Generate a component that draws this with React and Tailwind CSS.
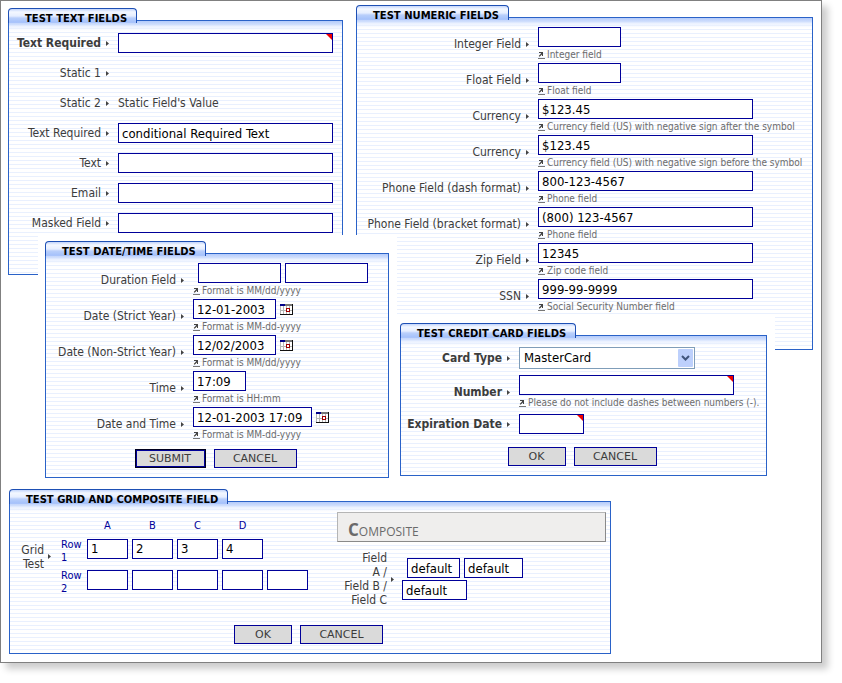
import React, { useId } from "react";

const stripes =
  "bg-[linear-gradient(to_bottom,#b4cbfa_0px,#d3e1fd_4px,#e9f0ff_5px,rgba(255,255,255,0)_10px),repeating-linear-gradient(to_bottom,#ffffff_0px,#ffffff_3px,#e9f0fe_3px,#e9f0fe_4px)]";
const inputBase =
  "block h-5 shrink-0 rounded-none border border-[#000099] bg-white px-[3px] text-[13px] leading-[18px] text-black outline-none";

function Panel({ title, children, className = "" }) {
  return (
    <section className={"flex flex-col " + className}>
      <h2 className="relative z-10 -mb-[3px] h-[15px] self-start rounded-t-[4px] border border-b-0 border-[#1d4fb4] bg-[linear-gradient(to_bottom,#c3d5fb_0px,#f3f7ff_3px,#e6eeff_7px,#b9cffb_9px,#a6c2fb_13px,#b4cbfa_15px)] pt-[3px] pr-[9px] pl-4 font-[Verdana,'DejaVu_Sans',sans-serif] text-[10px] leading-[13px] font-bold whitespace-nowrap text-black">
        {title}
      </h2>
      <div className={"grow border border-[#2a62c8] " + stripes}>{children}</div>
    </section>
  );
}

function Arrow() {
  return (
    <svg className="h-[5px] w-[3px] shrink-0" viewBox="0 0 3 5" aria-hidden="true">
      <path d="M0 0L3 2.5L0 5Z" fill="#444" />
    </svg>
  );
}

function Row({ label, id, labelWidth, className = "", bold, help, children }) {
  const Tag = id ? "label" : "span";
  return (
    <div className={"flex items-center gap-[9px] " + className}>
      <Tag
        htmlFor={id}
        className={
          "flex shrink-0 items-center justify-end gap-[5px] text-[12px] leading-[14px] whitespace-nowrap text-[#3c3c3c] " +
          labelWidth +
          (help ? " pb-[2px]" : "") +
          (bold ? " font-bold" : "")
        }
      >
        {label}
        <Arrow />
      </Tag>
      {help ? (
        <div>
          {children}
          <Help>{help}</Help>
        </div>
      ) : (
        children
      )}
    </div>
  );
}

function Box({ id, width, value, required, label }) {
  return (
    <span className="relative block w-fit shrink-0">
      <input
        id={id}
        aria-label={label}
        aria-required={required}
        defaultValue={value}
        className={inputBase + " " + width}
      />
      {required && (
        <svg className="absolute top-px right-px h-[6px] w-[6px]" viewBox="0 0 6 6" aria-hidden="true">
          <path d="M0 0H6V6Z" fill="#f00000" />
        </svg>
      )}
    </span>
  );
}

function Help({ children }) {
  return (
    <p className="flex h-4 items-center gap-[2px] font-[Verdana,'DejaVu_Sans_Condensed','DejaVu_Sans',sans-serif] text-[10px] leading-4 whitespace-nowrap text-[#6c6c6c]">
      <svg className="h-[7px] w-[7px] shrink-0" viewBox="0 0 7 7" aria-hidden="true">
        <path d="M1 0H5V4H4V2.4L1.600 4.800L0.700 4L3 1.500V1H1Z" fill="#444" />
        <path d="M0 6H7V7H0Z" fill="#777" />
      </svg>
      {children}
    </p>
  );
}

function CalendarButton() {
  return (
    <button type="button" aria-label="Choose date" className="h-[11px] w-[13px]">
      <svg className="block h-[11px] w-[13px]" viewBox="0 0 13 11" shapeRendering="crispEdges" aria-hidden="true">
        <rect width="13" height="11" fill="#111" />
        <rect x="0" y="2" width="12" height="8" fill="#fff" />
        <rect width="12" height="2" fill="#777" />
        <rect width="5" height="2" fill="#00008b" />
        <path d="M0 2H1V10H0ZM3 2H4V10H3ZM6 2H7V10H6ZM9 2H10V10H9ZM1 6H12V7H1Z" fill="#b5b5b5" />
        <rect x="6" y="4" width="4" height="4" fill="#a00000" />
        <rect x="7" y="5" width="2" height="2" fill="#fff" />
      </svg>
    </button>
  );
}

function Button({ children, width, primary }) {
  return (
    <button
      type="button"
      className={
        "h-[19px] border bg-[#dadada] font-[Verdana,'DejaVu_Sans',sans-serif] text-[11px] leading-[15px] text-[#3c3c3c] " +
        (primary ? "border-[#000020] shadow-[inset_0_0_0_1px_#000099] " : "border-[#000099] ") +
        width
      }
    >
      {children}
    </button>
  );
}

function TextPanel() {
  const id = useId();
  const rows = [
    { label: "Text Required", required: true },
    { label: "Static 1", text: "" },
    { label: "Static 2", text: "Static Field's Value" },
    { label: "Text Required", value: "conditional Required Text" },
    { label: "Text" },
    { label: "Email" },
    { label: "Masked Field" },
  ];
  return (
    <Panel title="TEST TEXT FIELDS">
      <div className="pt-[7px] pb-9">
        {rows.map((r, i) => (
          <Row
            key={i}
            label={r.label}
            bold={r.required}
            id={r.text === undefined ? id + i : undefined}
            labelWidth="w-[100px]"
            className="h-[30px]"
          >
            {r.text === undefined ? (
              <Box id={id + i} width="w-[215px]" value={r.value} required={r.required} />
            ) : (
              <span className="text-[12px] leading-[14px] text-[#3c3c3c]">{r.text}</span>
            )}
          </Row>
        ))}
      </div>
    </Panel>
  );
}

function NumericPanel() {
  const id = useId();
  const rows = [
    ["Integer Field", "", "Integer field", "w-[83px]"],
    ["Float Field", "", "Float field", "w-[83px]"],
    ["Currency", "$123.45", "Currency field (US) with negative sign after the symbol"],
    ["Currency", "$123.45", "Currency field (US) with negative sign before the symbol"],
    ["Phone Field (dash format)", "800-123-4567", "Phone field"],
    ["Phone Field (bracket format)", "(800) 123-4567", "Phone field"],
    ["Zip Field", "12345", "Zip code field"],
    ["SSN", "999-99-9999", "Social Security Number field"],
  ];
  return (
    <Panel title="TEST NUMERIC FIELDS">
      <div className="pt-[9px] pb-[34px]">
        {rows.map(([label, value, help, width = "w-[215px]"], i) => (
          <Row key={i} label={label} id={id + i} labelWidth="w-[172px]" help={help}>
            <Box id={id + i} width={width} value={value} />
          </Row>
        ))}
      </div>
    </Panel>
  );
}

function DatePanel() {
  const id = useId();
  const rows = [
    ["Date (Strict Year)", "12-01-2003", "Format is MM-dd-yyyy", "w-[83px]", true],
    ["Date (Non-Strict Year)", "12/02/2003", "Format is MM/dd/yyyy", "w-[83px]", true],
    ["Time", "17:09", "Format is HH:mm", "w-[53px]", false],
    ["Date and Time", "12-01-2003 17:09", "Format is MM-dd-yyyy", "w-[119px]", true],
  ];
  return (
    <Panel title="TEST DATE/TIME FIELDS">
      <div className="pt-[9px] pb-[9px]">
        <Row label="Duration Field" id={id + "d"} labelWidth="w-[138px]" help="Format is MM/dd/yyyy">
          <div className="flex gap-1 pl-[5px]">
            <Box id={id + "d"} width="w-[83px]" />
            <Box label="Duration Field end" width="w-[83px]" />
          </div>
        </Row>
        {rows.map(([label, value, help, width, calendar], i) => (
          <Row key={i} label={label} id={id + i} labelWidth="w-[138px]" help={help}>
            <div className="flex items-center gap-1">
              <Box id={id + i} width={width} value={value} />
              {calendar && <CalendarButton />}
            </div>
          </Row>
        ))}
        <div className="mt-[6px] flex justify-center gap-2 pr-[3px]">
          <Button width="w-[71px]" primary>SUBMIT</Button>
          <Button width="w-[83px]">CANCEL</Button>
        </div>
      </div>
    </Panel>
  );
}

function CreditPanel() {
  const id = useId();
  return (
    <Panel title="TEST CREDIT CARD FIELDS">
      <div className="pt-[11px] pb-[9px]">
        <Row label="Card Type" id={id + "t"} labelWidth="w-[109px]" bold>
          <span className="relative block">
            <select
              id={id + "t"}
              className="block h-[22px] w-[176px] appearance-none rounded-none border border-[#7f9db9] bg-white px-1 text-[13px] leading-5 text-black outline-none"
            >
              <option>MasterCard</option>
              <option>Visa</option>
            </select>
            <svg className="pointer-events-none absolute top-[2px] right-[2px] h-[18px] w-[15px]" viewBox="0 0 15 18" aria-hidden="true">
              <rect width="15" height="18" rx="1" fill="#bdd0fc" />
              <path d="M4 7L7.500 10.500L11 7" fill="none" stroke="#40557c" strokeWidth="2" />
            </svg>
          </span>
        </Row>
        <Row
          label="Number"
          id={id + "n"}
          labelWidth="w-[109px]"
          className="mt-[6px]"
          help="Please do not include dashes between numbers (-)."
          bold
        >
          <Box id={id + "n"} width="w-[215px]" required />
        </Row>
        <Row label="Expiration Date" id={id + "e"} labelWidth="w-[109px]" className="mt-[3px]" bold>
          <Box id={id + "e"} width="w-[65px]" required />
        </Row>
        <div className="mt-[13px] flex justify-center gap-2 pr-[3px]">
          <Button width="w-[58px]">OK</Button>
          <Button width="w-[83px]">CANCEL</Button>
        </div>
      </div>
    </Panel>
  );
}

function GridTable() {
  const heads = ["A", "B", "C", "D"];
  const rows = [
    ["Row 1", ["1", "2", "3", "4"]],
    ["Row 2", ["", "", "", "", ""]],
  ];
  return (
    <table className="border-collapse text-[11px] leading-[13px] text-[#000099]">
      <thead>
        <tr className="h-[15px]">
          <th></th>
          {heads.map((h) => (
            <th key={h} scope="col" className="pr-1 text-center align-middle font-normal">
              {h}
            </th>
          ))}
          <th></th>
        </tr>
      </thead>
      <tbody>
        {rows.map(([name, cells]) => (
          <tr key={name} className="h-[31px]">
            <th scope="row" className="w-[26px] pt-[5px] text-left align-top font-normal">
              <span className="block w-[24px]">{name}</span>
            </th>
            {cells.map((c, i) => (
              <td key={i} className="w-[45px] p-0 pr-1 align-middle">
                <Box width="w-[41px]" value={c} label={name + " column " + (i + 1)} />
              </td>
            ))}
          </tr>
        ))}
      </tbody>
    </table>
  );
}

function GridPanel() {
  return (
    <Panel title="TEST GRID AND COMPOSITE FIELD">
      <div className="pb-[9px]">
        <div className="flex items-start justify-between pr-1">
          <div className="flex items-center gap-[10px] pt-4 pl-2">
            <div className="flex items-center gap-1">
              <span className="w-[26px] text-right text-[12px] leading-[14px] text-[#3c3c3c]">Grid Test</span>
              <Arrow />
            </div>
            <GridTable />
          </div>
          <div className="w-[269px] pt-[10px]">
            <h3 className="h-[30px] border border-[#b5b5b5] border-r-[#8a8a8a] border-b-[#8a8a8a] bg-[#efeeed] pt-[5px] pl-[10px] font-['Open_Sans',sans-serif] text-[17px] leading-6 font-medium text-[#6a6a6a] [font-variant:small-caps] first-letter:font-bold">
              Composite
            </h3>
            <div className="mt-[9px] flex items-center gap-2">
              <div className="flex items-center gap-1">
                <span className="w-[50px] text-right text-[12px] leading-[14px] text-[#3c3c3c]">
                  Field
                  <br />A /<br />
                  Field B /<br />
                  Field C
                </span>
                <Arrow />
              </div>
              <div className="flex flex-col gap-[2px]">
                <div className="flex gap-1 pl-[5px]">
                  <Box label="Field A" width="w-[53px]" value="default" />
                  <Box label="Field B" width="w-[59px]" value="default" />
                </div>
                <Box label="Field C" width="w-[65px]" value="default" />
              </div>
            </div>
          </div>
        </div>
        <div className="mt-[18px] flex justify-center gap-2 pr-[3px]">
          <Button width="w-[58px]">OK</Button>
          <Button width="w-[83px]">CANCEL</Button>
        </div>
      </div>
    </Panel>
  );
}

export default function App() {
  return (
    <div className="overflow-x-hidden bg-white pr-5 pb-5 font-[Tahoma,'DejaVu_Sans_Condensed','DejaVu_Sans',sans-serif]">
      <main className="border border-[#808080] bg-white pb-2 shadow-[6px_6px_7px_rgba(0,0,0,0.2)]">
        <div className="grid grid-cols-[335fr_457fr] items-start gap-x-[13px] pr-2 pl-[7px]">
          <div className="relative z-10 pt-[7px]">
            <TextPanel />
            <div className="relative -mt-10 -mr-[54px] ml-[30px] bg-white pt-[6px] pr-2 pl-[7px]">
              <DatePanel />
            </div>
          </div>
          <div className="pt-1">
            <NumericPanel />
            <div className="relative mr-[38px] -mt-[33px] ml-[37px] bg-white pt-[6px] pr-2 pl-[7px]">
              <CreditPanel />
            </div>
          </div>
        </div>
        <div className="mt-[11px] ml-2 max-w-[602px]">
          <GridPanel />
        </div>
      </main>
    </div>
  );
}
